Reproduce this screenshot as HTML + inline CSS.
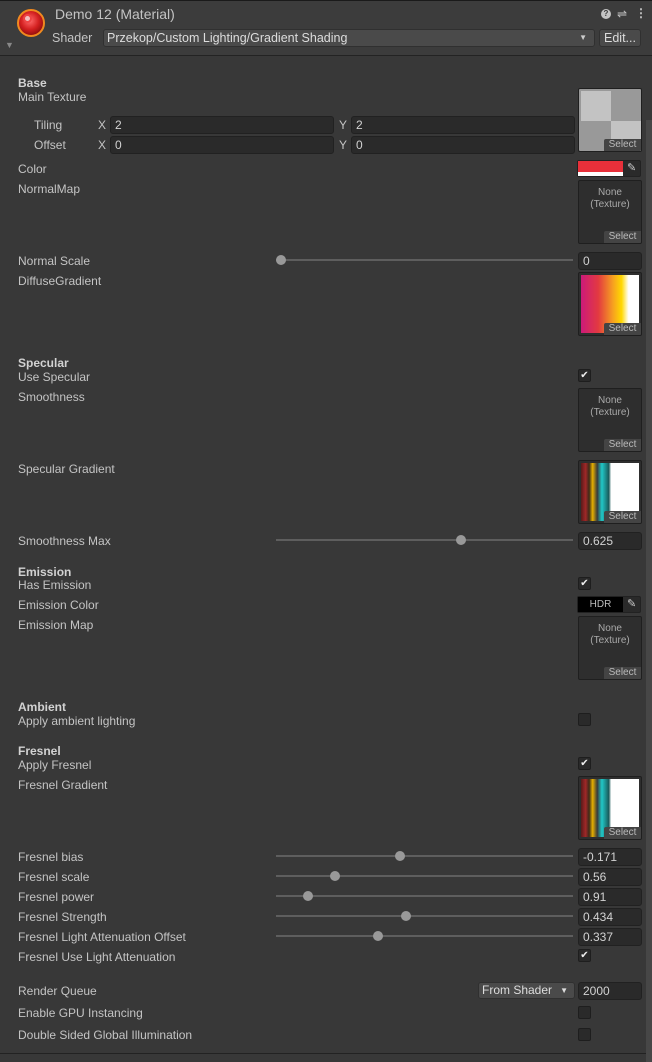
<!DOCTYPE html>
<html><head><meta charset="utf-8"><style>
*{box-sizing:border-box;margin:0;padding:0}
body{width:652px;height:1062px;background:#383838;font-family:"Liberation Sans",sans-serif;font-size:12px;color:#c4c4c4;position:relative;overflow:hidden}
.a{position:absolute}
.t{position:absolute;left:18px;line-height:16px;white-space:nowrap}
.b{font-weight:bold;color:#d2d2d2}
.f{position:absolute;background:#2a2a2a;border:1px solid #212121;border-radius:3px;height:18px;line-height:16px;padding-left:4px;color:#d2d2d2}
.tex{position:absolute;left:578px;width:64px;height:64px;background:#2e2e2e;border:1px solid #1f1f1f;border-radius:2px;overflow:hidden}
.sel{position:absolute;right:0;bottom:0;width:37px;height:12px;background:#444;color:#bbb;font-size:10px;line-height:12px;text-align:center;border-top-left-radius:2px}
.none{position:absolute;top:6px;width:100%;text-align:center;font-size:10px;line-height:12px;color:#aaa}
.tr{position:absolute;left:276px;width:297px;height:2px;background:#5e5e5e}
.th{position:absolute;width:10px;height:10px;border-radius:50%;background:#999}
.cb{position:absolute;left:578px;width:13px;height:13px;background:#2a2a2a;border:1px solid #1e1e1e;border-radius:2px;color:#eee;font-size:10px;line-height:11px;text-align:center}
</style></head><body>
<!-- header -->
<div class="a" style="left:0;top:0;width:652px;height:56px;background:#3c3c3c;border-top:1px solid #1a1a1a;border-bottom:1px solid #232323"></div>
<div class="a" style="left:17px;top:9px;width:28px;height:28px;border-radius:50%;background:radial-gradient(circle at 45% 40%,#ff6a6a 0,#d42020 45%,#8a0b0b 80%);border:2px solid #f08a20"></div>
<div class="a" style="left:23px;top:14px;width:9px;height:9px;border-radius:50%;background:#f2c0c0;border:2px solid #e44"></div>
<div class="a" style="left:5px;top:40px;color:#888;font-size:9px">▼</div>
<div class="a" style="left:55px;top:6px;font-size:14px;color:#c4c4c4">Demo 12 (Material)</div>
<div class="a" style="left:52px;top:31px;font-size:12.5px">Shader</div>
<div class="a" style="left:103px;top:29px;width:492px;height:18px;background:#4a4a4a;border:1px solid #303030;border-radius:3px;padding-left:3px;line-height:16px;color:#ddd;font-size:12.5px">Przekop/Custom Lighting/Gradient Shading<span style="position:absolute;right:7px;top:0;font-size:8px;color:#ccc">▼</span></div>
<div class="a" style="left:599px;top:29px;width:42px;height:18px;background:#4a4a4a;border:1px solid #303030;border-radius:3px;text-align:center;line-height:16px;color:#ddd;font-size:12.5px">Edit...</div>
<div class="a" style="left:601px;top:9px;width:10px;height:10px;border-radius:50%;background:#c4c4c4;color:#3c3c3c;font-size:8px;line-height:10px;text-align:center;font-weight:bold">?</div>
<div class="a" style="left:617px;top:8px;color:#c4c4c4;font-size:12px;line-height:12px">⇌</div>
<div class="a" style="left:635px;top:7px;color:#c4c4c4;font-size:12px;line-height:12px;font-weight:bold">⋮</div>
<!-- scrollbar -->
<div class="a" style="left:646px;top:120px;width:6px;height:942px;background:#474747"></div>
<div class="a" style="left:0;top:1053px;width:646px;height:1px;background:#222"></div>

<div class="t b" style="top:75px">Base</div>
<div class="t" style="top:89px">Main Texture</div>
<div class="tex" style="top:88px;background:#999"><div class="a" style="left:2px;top:2px;width:30px;height:30px;background:#c3c3c3"></div><div class="a" style="left:32px;top:32px;width:30px;height:30px;background:#c3c3c3"></div><div class="sel">Select</div></div>
<div class="t" style="left:34px;top:117px">Tiling</div>
<div class="t" style="left:34px;top:137px">Offset</div>
<div class="t" style="left:98px;top:117px">X</div><div class="t" style="left:98px;top:137px">X</div>
<div class="t" style="left:339px;top:117px">Y</div><div class="t" style="left:339px;top:137px">Y</div>
<div class="f" style="left:110px;top:116px;width:224px">2</div>
<div class="f" style="left:351px;top:116px;width:224px">2</div>
<div class="f" style="left:110px;top:136px;width:224px">0</div>
<div class="f" style="left:351px;top:136px;width:224px">0</div>

<div class="t" style="top:161px">Color</div>
<div class="a" style="left:577px;top:160px;width:64px;height:17px;background:#2a2a2a;border:1px solid #222;border-radius:2px"><div class="a" style="left:0;top:0;width:45px;height:11px;background:#e8303a"></div><div class="a" style="left:0;top:11px;width:45px;height:4px;background:#fff"></div><div class="a" style="left:49px;top:0;color:#ccc;font-size:11px">✎</div></div>
<div class="t" style="top:181px">NormalMap</div>
<div class="tex" style="top:180px"><div class="none">None<br>(Texture)</div><div class="sel">Select</div></div>
<div class="t" style="top:253px">Normal Scale</div>
<div class="tr" style="top:259px"></div><div class="th" style="left:276px;top:255px"></div>
<div class="f" style="left:578px;top:252px;width:64px">0</div>
<div class="t" style="top:273px">DiffuseGradient</div>
<div class="tex" style="top:272px"><div class="a" style="left:2px;top:2px;width:58px;height:58px;background:linear-gradient(90deg,#cc1a7a 0%,#e33a40 30%,#f6a020 55%,#ffd800 70%,#fff 82%)"></div><div class="sel">Select</div></div>

<div class="t b" style="top:355px">Specular</div>
<div class="t" style="top:369px">Use Specular</div>
<div class="cb" style="top:369px">✔</div>
<div class="t" style="top:389px">Smoothness</div>
<div class="tex" style="top:388px"><div class="none">None<br>(Texture)</div><div class="sel">Select</div></div>
<div class="t" style="top:461px">Specular Gradient</div>
<div class="tex" style="top:460px"><div class="a" style="left:2px;top:2px;width:58px;height:58px;background:linear-gradient(90deg,#5a1a1a 0,#a02828 8%,#3a2a1a 14%,#e8b000 20%,#3a3a3a 28%,#20c8c8 36%,#1a5a5a 48%,#fff 52%)"></div><div class="sel">Select</div></div>
<div class="t" style="top:533px">Smoothness Max</div>
<div class="tr" style="top:539px"></div><div class="th" style="left:456px;top:535px"></div>
<div class="f" style="left:578px;top:532px;width:64px">0.625</div>

<div class="t b" style="top:564px">Emission</div>
<div class="t" style="top:577px">Has Emission</div>
<div class="cb" style="top:577px">✔</div>
<div class="t" style="top:597px">Emission Color</div>
<div class="a" style="left:577px;top:596px;width:64px;height:17px;background:#2a2a2a;border:1px solid #222;border-radius:2px"><div class="a" style="left:0;top:0;width:45px;height:15px;background:#000;color:#bbb;font-size:10px;text-align:center;line-height:15px">HDR</div><div class="a" style="left:49px;top:0;color:#ccc;font-size:11px">✎</div></div>
<div class="t" style="top:617px">Emission Map</div>
<div class="tex" style="top:616px"><div class="none">None<br>(Texture)</div><div class="sel">Select</div></div>

<div class="t b" style="top:699px">Ambient</div>
<div class="t" style="top:713px">Apply ambient lighting</div>
<div class="cb" style="top:713px"></div>
<div class="t b" style="top:743px">Fresnel</div>
<div class="t" style="top:757px">Apply Fresnel</div>
<div class="cb" style="top:757px">✔</div>
<div class="t" style="top:777px">Fresnel Gradient</div>
<div class="tex" style="top:776px"><div class="a" style="left:2px;top:2px;width:58px;height:58px;background:linear-gradient(90deg,#5a1a1a 0,#a02828 8%,#3a2a1a 14%,#e8b000 20%,#3a3a3a 28%,#20c8c8 36%,#1a5a5a 48%,#fff 52%)"></div><div class="sel">Select</div></div>

<div class="t" style="top:849px">Fresnel bias</div>
<div class="tr" style="top:855px"></div><div class="th" style="left:395px;top:851px"></div>
<div class="f" style="left:578px;top:848px;width:64px">-0.171</div>
<div class="t" style="top:869px">Fresnel scale</div>
<div class="tr" style="top:875px"></div><div class="th" style="left:330px;top:871px"></div>
<div class="f" style="left:578px;top:868px;width:64px">0.56</div>
<div class="t" style="top:889px">Fresnel power</div>
<div class="tr" style="top:895px"></div><div class="th" style="left:303px;top:891px"></div>
<div class="f" style="left:578px;top:888px;width:64px">0.91</div>
<div class="t" style="top:909px">Fresnel Strength</div>
<div class="tr" style="top:915px"></div><div class="th" style="left:401px;top:911px"></div>
<div class="f" style="left:578px;top:908px;width:64px">0.434</div>
<div class="t" style="top:929px">Fresnel Light Attenuation Offset</div>
<div class="tr" style="top:935px"></div><div class="th" style="left:373px;top:931px"></div>
<div class="f" style="left:578px;top:928px;width:64px">0.337</div>
<div class="t" style="top:949px">Fresnel Use Light Attenuation</div>
<div class="cb" style="top:949px">✔</div>

<div class="t" style="top:983px">Render Queue</div>
<div class="a" style="left:478px;top:982px;width:97px;height:17px;background:#4a4a4a;border:1px solid #303030;border-radius:3px;padding-left:3px;line-height:15px;color:#ddd">From Shader<span style="position:absolute;right:6px;top:0;font-size:8px">▼</span></div>
<div class="f" style="left:578px;top:982px;width:64px">2000</div>
<div class="t" style="top:1005px">Enable GPU Instancing</div>
<div class="cb" style="top:1006px"></div>
<div class="t" style="top:1027px">Double Sided Global Illumination</div>
<div class="cb" style="top:1028px"></div>
</body></html>
